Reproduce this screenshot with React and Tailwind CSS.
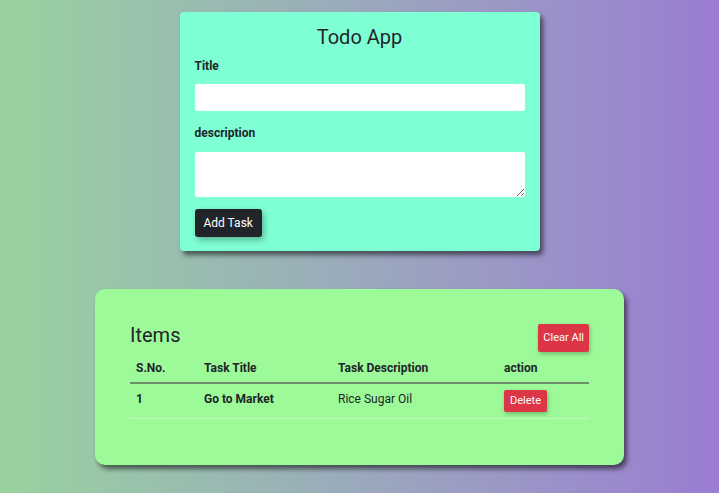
import React, { useState } from "react";

export default function App() {
  const [items] = useState([
    { title: "Go to Market", desc: "Rice Sugar Oil" },
  ]);

  return (
    <div
      className="min-h-screen w-full flex flex-col items-center bg-gradient-to-r from-[#98d29e] to-[#9a7cd2] text-[#212529]"
      style={{ fontFamily: "Roboto, 'Liberation Sans', sans-serif" }}
    >
      {/* Form card */}
      <div className="mt-[12px] w-[360px] h-[239px] bg-[#7fffd4] rounded-[4px] shadow-[3px_4px_5px_rgba(0,0,0,0.55)] px-[15px] pt-[13px]">
        <h1 className="text-center text-[20px] leading-[24px] font-normal">Todo App</h1>
        <label className="block mt-[10px] text-[12px] font-bold leading-[14px]">Title</label>
        <input
          className="block mt-[11px] w-full h-[27px] bg-white rounded-[2px] outline-none"
          type="text"
        />
        <label className="block mt-[15px] text-[12px] font-bold leading-[14px]">description</label>
        <textarea className="block mt-[12px] w-full h-[45px] bg-white rounded-[2px] outline-none resize-y" />
        <button className="mt-[12px] h-[28px] px-[9px] bg-[#212529] text-white text-[12px] rounded-[3px] shadow-[2px_3px_6px_rgba(0,0,0,0.3)]">
          Add Task
        </button>
      </div>

      {/* Items card */}
      <div className="mt-[38px] w-[529px] h-[176px] bg-[#9cfa98] rounded-[10px] shadow-[3px_4px_5px_rgba(0,0,0,0.55)] pl-[35px] pr-[35px] pt-[35px]">
        <div className="flex items-start justify-between">
          <h2 className="mt-[-1px] text-[20px] leading-[24px]">Items</h2>
          <button className="h-[28px] px-[5px] bg-[#dc3545] text-white text-[11px] rounded-[2px] shadow-[1px_2px_4px_rgba(0,0,0,0.25)]">
            Clear All
          </button>
        </div>
        <table className="w-full mt-[7px] text-[12px] border-collapse">
          <thead>
            <tr className="border-b-2 border-[#6c8f69]">
              <th className="w-[68px] text-left font-bold px-[6px] pb-[5px] pt-0">S.No.</th>
              <th className="w-[134px] text-left font-bold px-[6px] pb-[5px]">Task Title</th>
              <th className="w-[166px] text-left font-bold px-[6px] pb-[5px]">Task Description</th>
              <th className="text-left font-bold px-[6px] pb-[5px]">action</th>
            </tr>
          </thead>
          <tbody>
            {items.map((it, i) => (
              <tr key={i} className="border-b border-[#c2f8bf]">
                <td className="px-[6px] py-[6px] align-top font-bold">{i + 1}</td>
                <td className="px-[6px] py-[6px] align-top font-bold">{it.title}</td>
                <td className="px-[6px] py-[6px] align-top">{it.desc}</td>
                <td className="px-[6px] py-[6px] align-top">
                  <button className="h-[22px] px-[6px] bg-[#dc3545] text-white text-[11px] rounded-[2px] shadow-[1px_2px_4px_rgba(0,0,0,0.25)]">
                    Delete
                  </button>
                </td>
              </tr>
            ))}
          </tbody>
        </table>
      </div>
    </div>
  );
}
